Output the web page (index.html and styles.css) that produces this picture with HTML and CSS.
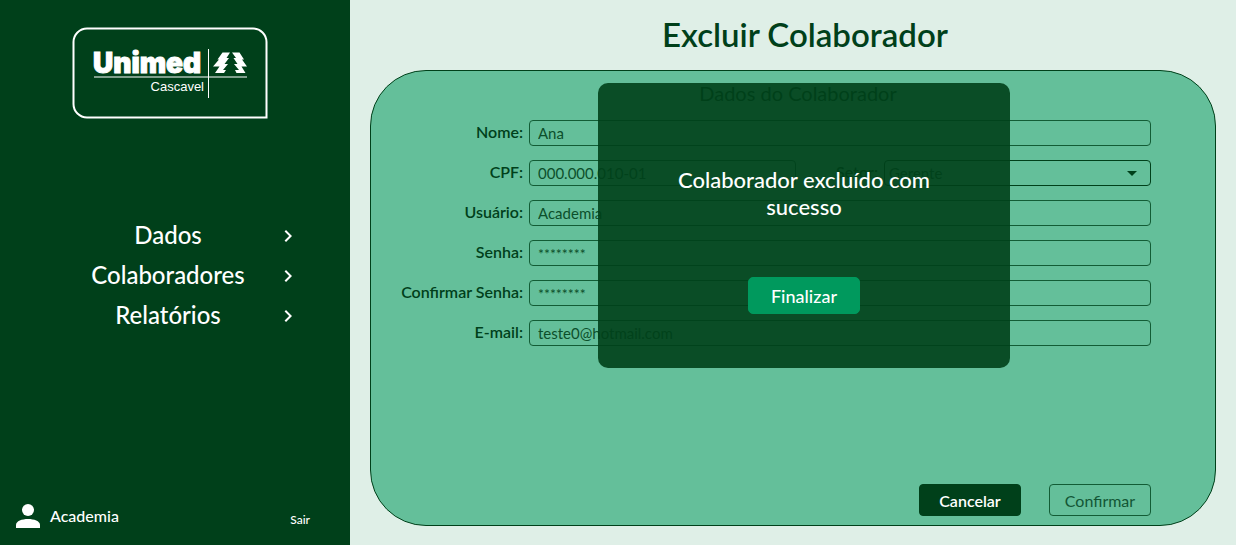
FILE: index.html
```html
<!DOCTYPE html>
<html lang="pt-BR">
<head>
<meta charset="utf-8">
<meta name="viewport" content="width=device-width, initial-scale=1">
<title>Excluir Colaborador</title>
<link rel="stylesheet" href="styles.css">
</head>
<body>
<div class="app">
  <aside class="sidebar">
    <svg class="logo" viewBox="0 0 196 92" role="img" aria-label="Unimed Cascavel">
      <path class="logo-frame" d="M15 1.500H181a13.500 13.500 0 0 1 13.500 13.500V90.500H15A13.500 13.500 0 0 1 1.500 77V15A13.500 13.500 0 0 1 15 1.500Z"/>
      <text class="logo-name" x="21" y="46">Unimed</text>
      <text class="logo-unit" x="132" y="64" text-anchor="end">Cascavel</text>
      <path class="logo-rule" d="M22 50H175M136.500 22V71"/>
      <path class="logo-tree" d="M150.500 25.500H158L154.500 31H157L152.500 37H156L151 43H154L152 46H143L147.500 39.500H141L147 32.500H145.500ZM160 25.500H167.500L172 32.500H170L175 39.500H169.500L173.500 46H164.500L163 43H167L162 37H165.500L161.500 31H164Z"/>
    </svg>
    <nav class="menu">
      <a class="menu-item" href="#dados"><span>Dados</span><svg class="chevron" viewBox="0 0 24 24"><path d="M10 6 8.590 7.410 13.170 12l-4.580 4.590L10 18l6-6z"/></svg></a>
      <a class="menu-item" href="#colaboradores"><span>Colaboradores</span><svg class="chevron" viewBox="0 0 24 24"><path d="M10 6 8.590 7.410 13.170 12l-4.580 4.590L10 18l6-6z"/></svg></a>
      <a class="menu-item" href="#relatorios"><span>Relatórios</span><svg class="chevron" viewBox="0 0 24 24"><path d="M10 6 8.590 7.410 13.170 12l-4.580 4.590L10 18l6-6z"/></svg></a>
    </nav>
    <div class="account">
      <svg class="avatar" viewBox="0 0 24 24"><circle cx="12" cy="6" r="6"/><path d="M0 24v-3c0-4 6-6 12-6s12 2 12 6v3z"/></svg>
      <span class="account-name">Academia</span>
      <a class="logout" href="#sair">Sair</a>
    </div>
  </aside>
  <main class="main">
    <h1 class="title">Excluir Colaborador</h1>
    <form class="panel">
      <h2 class="subtitle">Dados do Colaborador</h2>
      <div class="fields">
        <label for="nome">Nome:</label>
        <input class="field" id="nome" type="text" value="Ana">
        <label for="cpf">CPF:</label>
        <div class="split">
          <input class="field" id="cpf" type="text" value="000.000.010-01">
          <label for="setor">Setor:</label>
          <div class="select-wrap">
            <select class="field select" id="setor"><option>Gerente</option></select>
            <svg class="arrow" viewBox="0 0 10 5"><path d="M0 0h10L5 5z"/></svg>
          </div>
        </div>
        <label for="usuario">Usuário:</label>
        <input class="field" id="usuario" type="text" value="Academia">
        <label for="senha">Senha:</label>
        <input class="field secret" id="senha" type="text" value="********">
        <label for="confirmar">Confirmar Senha:</label>
        <input class="field secret" id="confirmar" type="text" value="********">
        <label for="email">E-mail:</label>
        <input class="field" id="email" type="email" value="teste0@hotmail.com">
      </div>
      <div class="actions">
        <button class="button cancel" type="button">Cancelar</button>
        <button class="button confirm" type="button">Confirmar</button>
      </div>
    </form>
    <div class="overlay">
      <div class="dialog" role="dialog" aria-labelledby="message">
        <p class="message" id="message">Colaborador excluído com sucesso</p>
        <button class="button finish" type="button">Finalizar</button>
      </div>
    </div>
  </main>
</div>
</body>
</html>
```
FILE: styles.css
```css
:root {
  --dark: #00401a;
  --green: #00995d;
  --panel: #64bf9a;
  --page: #dfefe7;
  --line: #125c35;
}

* { box-sizing: border-box; }

body {
  margin: 0;
  background: var(--page);
  color: var(--dark);
  font-family: Lato, "Liberation Sans", sans-serif;
  font-size: 16px;
}

.app {
  display: flex;
  min-height: 100vh;
}

.sidebar {
  flex: 0 0 350px;
  display: flex;
  flex-direction: column;
  padding-top: 27px;
  background: var(--dark);
  color: #fff;
}

.logo {
  width: 196px;
  height: 92px;
  margin-left: 72px;
}
.logo-frame { fill: none; stroke: #fff; stroke-width: 2; }
.logo-name {
  fill: #fff;
  stroke: #fff;
  stroke-width: 1;
  font: 900 28px Inter, Roboto, sans-serif;
}
.logo-unit { fill: #fff; font: 13px "Liberation Sans", sans-serif; }
.logo-rule { fill: none; stroke: #fff; stroke-width: 1; }
.logo-tree { fill: #fff; }

.menu {
  margin-top: 97px;
  padding-left: 60px;
}
.menu-item {
  display: grid;
  grid-template-columns: 216px 24px;
  align-items: center;
  height: 40px;
  color: #fff;
  font-size: 24px;
  font-weight: 500;
  line-height: 28px;
  text-align: center;
  text-decoration: none;
}
.menu-item span { padding-bottom: 2px; }
.chevron { width: 24px; height: 24px; fill: #fff; }

.account {
  display: flex;
  align-items: center;
  gap: 10px;
  margin-top: auto;
  padding: 0 40px 17px 16px;
  font-weight: 500;
}
.account-name { padding-bottom: 2px; }
.avatar { width: 24px; height: 24px; fill: #fff; }
.logout {
  margin-left: auto;
  padding-top: 6px;
  color: #fff;
  font-size: 12px;
  font-weight: 500;
  text-decoration: none;
}

.main {
  position: relative;
  flex: 1;
  display: flex;
  flex-direction: column;
  padding: 14px 20px 19px;
}

.title {
  margin: 0 0 16px;
  padding-left: 24px;
  font-size: 33px;
  font-weight: 600;
  line-height: 40px;
  text-align: center;
}

.panel {
  flex: 1;
  display: flex;
  flex-direction: column;
  padding: 10px 64px 9px 24px;
  border: 1px solid var(--dark);
  border-radius: 56px;
  background: var(--panel);
}

.subtitle {
  margin: 0 0 15px;
  padding-left: 50px;
  font-size: 20px;
  font-weight: 400;
  line-height: 24px;
  text-align: center;
}

.fields {
  display: grid;
  grid-template-columns: 128px 1fr;
  column-gap: 6px;
  row-gap: 14px;
  align-items: center;
}
.fields label {
  padding-bottom: 2px;
  font-weight: 600;
  line-height: 24px;
  text-align: right;
}
.field {
  width: 100%;
  height: 26px;
  min-width: 0;
  padding: 0 8px;
  border: 1px solid var(--line);
  border-radius: 4px;
  background: transparent;
  color: #0c4f2b;
  font: 400 15px Lato, "Liberation Sans", sans-serif;
}
.secret { font-size: 14px; }
.split {
  display: grid;
  grid-template-columns: 1fr 76px 1fr;
  column-gap: 6px;
  align-items: center;
}
.select-wrap { position: relative; display: flex; }
.select { appearance: none; padding-left: 4px; border-color: var(--dark); }
.arrow {
  position: absolute;
  top: 11px;
  right: 14px;
  width: 10px;
  height: 5px;
  fill: var(--dark);
  pointer-events: none;
}

.actions {
  display: flex;
  justify-content: flex-end;
  gap: 28px;
  margin-top: auto;
}
.button {
  width: 102px;
  height: 32px;
  padding: 0;
  border: 1px solid var(--dark);
  border-radius: 4px;
  font: 500 16px Lato, "Liberation Sans", sans-serif;
}
.cancel { background: var(--dark); color: #fff; font-weight: 600; }
.confirm { border-color: var(--line); background: transparent; color: #125635; font-weight: 400; }

.overlay {
  position: absolute;
  inset: 83px 0 auto 22px;
  display: flex;
  justify-content: center;
}
.dialog {
  display: flex;
  flex-direction: column;
  align-items: center;
  width: 412px;
  padding: 83px 72px 54px;
  border-radius: 10px;
  background: rgb(0 64 26 / 90%);
  color: #fff;
}
.message {
  margin: 0 0 57px;
  font-size: 22px;
  font-weight: 500;
  line-height: 27px;
  text-align: center;
}
.finish {
  width: 112px;
  height: 37px;
  border-color: var(--green);
  border-radius: 5px;
  background: var(--green);
  color: #fff;
  font-size: 18px;
}
```
